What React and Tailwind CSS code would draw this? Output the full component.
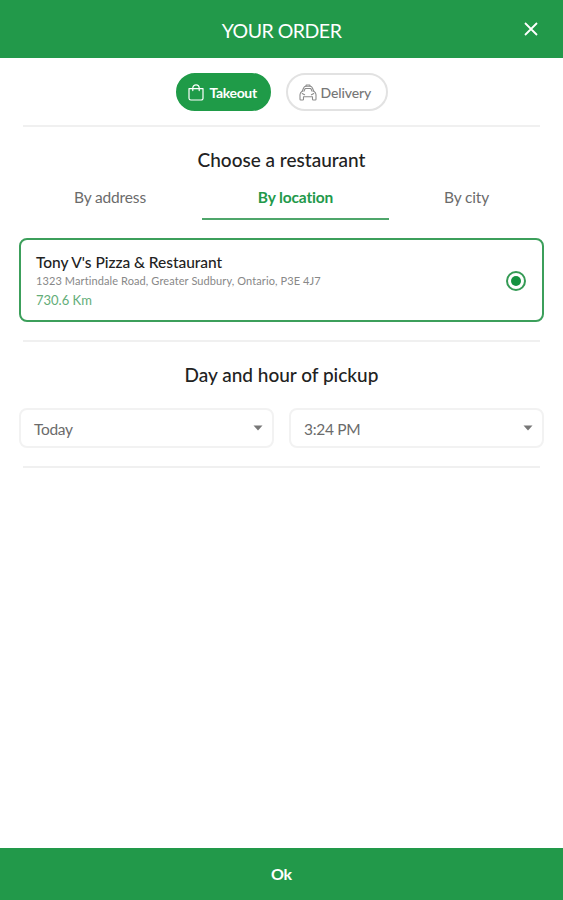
import { useState } from 'react';

const TABS = [
  { id: 'address', label: 'By address', width: 'w-[184px]' },
  { id: 'location', label: 'By location', width: 'w-[187px]' },
  { id: 'city', label: 'By city', width: 'w-[155px]' },
];

function BagIcon() {
  return (
    <svg width="16" height="17" viewBox="0 0 16 17" fill="none" stroke="currentColor" strokeWidth="1.2" strokeLinejoin="round">
      <path d="M1 4.6h14v9.6a1.8 1.8 0 0 1-1.8 1.8H2.8A1.8 1.8 0 0 1 1 14.2z" />
      <path d="M4.8 6.6V4a3.2 3.2 0 0 1 6.4 0v2.6" strokeLinecap="round" />
    </svg>
  );
}

function CarIcon() {
  return (
    <svg width="18" height="17" viewBox="0 0 18 17" fill="none" stroke="currentColor" strokeWidth="1.1" strokeLinejoin="round" strokeLinecap="round" className="text-[#8c8c8c]">
      <path d="M6.8 2.2 7.3 1h3.4l.5 1.2" />
      <path d="M3.2 7.2 4.7 3.8Q5.3 2.3 6.8 2.3h4.4q1.5 0 2.1 1.5l1.5 3.4" />
      <path d="M4.9 7.3 6.2 4.5h5.6l1.3 2.8" />
      <path d="M3.2 7.2Q1 8.4 1 10.8v4.4q0 .8.8.8h1.9q.8 0 .8-.8v-2.4h9v2.4q0 .8.8.8h1.9q.8 0 .8-.8v-4.4q0-2.4-2.2-3.6" />
      <path d="M3.2 9.6 5.6 10.8M14.8 9.6l-2.4 1.2" />
    </svg>
  );
}

function Divider({ className = '' }) {
  return <hr className={`mx-[23px] h-[2px] border-0 bg-[#f0f0f0] ${className}`} />;
}

function SelectBox({ value }) {
  return (
    <button className="flex h-10 flex-1 items-center justify-between rounded-lg border-2 border-[#f2f2f2] bg-white pr-[9px] pl-[13px] text-[15.5px] tracking-[-0.3px] text-[#6b6b6b]">
      <span className="pt-[3px]">{value}</span>
      <svg width="10" height="6" viewBox="0 0 10 6" className="text-[#777]">
        <path d="M0.5 0.5h9L5 5.5z" fill="currentColor" />
      </svg>
    </button>
  );
}

function App() {
  const [mode, setMode] = useState('takeout');
  const [tab, setTab] = useState('location');

  const pill = (active) =>
    active
      ? 'border-[#1f9b48] bg-[#1f9b48] font-bold text-white'
      : 'border-[#e2e2e2] bg-white font-medium text-[#777]';

  return (
    <div className="flex h-screen flex-col bg-white font-['Lato',sans-serif] [font-variant-ligatures:none]">
      {/* Header */}
      <header className="grid h-[58px] shrink-0 grid-cols-[1fr_auto_1fr] items-center bg-[#22994a] text-white">
        <h1 className="col-start-2 pt-[3px] text-[19.5px] leading-6 tracking-[-0.5px]">YOUR ORDER</h1>
        <button className="mr-[25px] justify-self-end" aria-label="Close">
          <svg width="14" height="14" viewBox="0 0 14 14" stroke="currentColor" strokeWidth="1.8">
            <path d="M1 1l12 12M13 1L1 13" />
          </svg>
        </button>
      </header>

      <main className="flex-1">
        {/* Order type */}
        <div className="flex justify-center gap-[15px] pt-[15px]">
          <button
            onClick={() => setMode('takeout')}
            className={`flex h-[38px] w-[95px] items-center gap-[6px] rounded-full border-2 pl-[10px] text-[14px] tracking-[-0.35px] ${pill(mode === 'takeout')}`}
          >
            <BagIcon />
            <span className="pt-px">Takeout</span>
          </button>
          <button
            onClick={() => setMode('delivery')}
            className={`flex h-[38px] w-[102px] items-center gap-1 rounded-full border-2 pl-[11px] text-[14px] tracking-[-0.1px] ${pill(mode === 'delivery')}`}
          >
            <CarIcon />
            <span className="pt-px">Delivery</span>
          </button>
        </div>

        <Divider className="mt-[14px]" />

        {/* Restaurant */}
        <h2 className="mt-[21px] text-center text-[19px] leading-6 font-medium text-[#222]">Choose a restaurant</h2>
        <div className="mt-[8px] flex px-[18px]">
          {TABS.map((t) => (
            <button
              key={t.id}
              onClick={() => setTab(t.id)}
              className={`h-[40px] border-b-2 pb-[3px] text-[15.5px] tracking-[-0.15px] ${t.width} ${
                tab === t.id ? 'border-[#4fa66b] font-bold text-[#22994a]' : 'border-transparent text-[#6b6b6b]'
              }`}
            >
              {t.label}
            </button>
          ))}
        </div>

        <div className="mx-[19px] mt-[18px] flex h-[84px] items-center justify-between rounded-lg border-2 border-[#3c9f5b] pr-[16px] pl-[15px]">
          <div className="pt-[2px]">
            <p className="text-[15.5px] leading-5 font-medium tracking-[-0.05px] text-[#222]">Tony V's Pizza &amp; Restaurant</p>
            <p className="text-[11px] leading-[18px] tracking-[0.1px] text-[#888]">1323 Martindale Road, Greater Sudbury, Ontario, P3E 4J7</p>
            <p className="text-[13px] leading-5 text-[#63ad78]">730.6 Km</p>
          </div>
          <span className="mt-px flex size-[20px] items-center justify-center rounded-full border-2 border-[#359b55]">
            <span className="size-[10px] rounded-full bg-[#159240]" />
          </span>
        </div>

        <Divider className="mt-[18px]" />

        {/* Pickup time */}
        <h2 className="mt-[21px] text-center text-[19px] leading-6 font-medium text-[#222]">Day and hour of pickup</h2>
        <div className="mt-[21px] flex gap-[15px] px-[19px]">
          <SelectBox value="Today" />
          <SelectBox value="3:24 PM" />
        </div>

        <Divider className="mt-[18px]" />
      </main>

      <button className="h-[52px] shrink-0 bg-[#22994a] text-[16px] font-bold tracking-[-0.3px] text-white">Ok</button>
    </div>
  );
}

export default App;
